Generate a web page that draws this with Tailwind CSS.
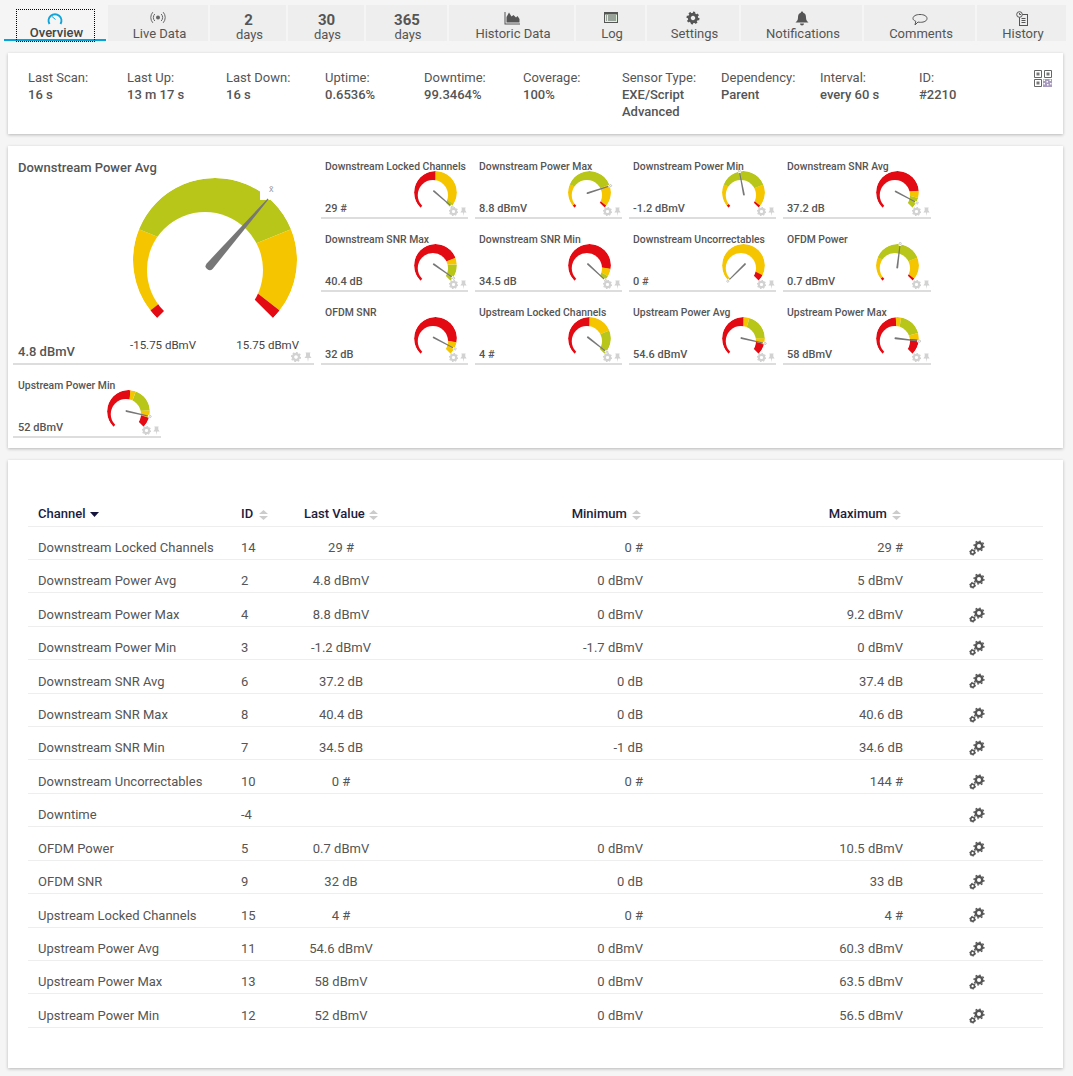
<!DOCTYPE html>
<html>
<head>
<meta charset="utf-8">
<script src="https://cdn.jsdelivr.net/npm/@tailwindcss/browser@4"></script>
</head>
<body class="bg-[#f5f5f5] font-['Roboto',sans-serif] text-[13px] text-[#555] w-[1073px] h-[1076px] overflow-hidden">
<svg class="absolute w-0 h-0">
  <defs>
    <mask id="band" maskUnits="userSpaceOnUse" x="-100" y="-100" width="200" height="200">
      <circle r="82" fill="#fff"/>
      <circle cx="-10" cy="10" r="58" fill="#000"/>
    </mask>
    <g id="needle">
      <path d="M-4,8 A4,4 0 0 0 4,8 L0.6,-81 L-0.6,-81 Z" fill="#777"/>
    </g>
    <g id="needles">
      <path d="M-3.5,8 A3.5,3.5 0 0 0 3.5,8 L1.8,-81 L-1.8,-81 Z" fill="#777"/>
      <path d="M-5,-90 L5,-90 L5,-76 L-5,-76 Z" fill="#fff"/>
      <circle cy="-85" r="4" fill="none" stroke="#bbb" stroke-width="3"/>
    </g>
    <g id="gear">
      <circle r="3" fill="none" stroke="currentColor" stroke-width="2.4"/>
      <circle r="4.4" fill="none" stroke="currentColor" stroke-width="1.6" pathLength="16" stroke-dasharray="1 1"/>
    </g>
    <g id="pin">
      <path d="M-2.5,-4.5 L2.5,-4.5 L2,-3.6 L2,-1 L3.5,1 L0.6,1 L0,5 L-0.6,1 L-3.5,1 L-2,-1 L-2,-3.6 Z" fill="currentColor"/>
    </g>
    <g id="cogs">
      <circle cx="10" cy="6" r="3.2" fill="none" stroke="currentColor" stroke-width="2.4"/>
      <circle cx="10" cy="6" r="4.9" fill="none" stroke="currentColor" stroke-width="1.4" pathLength="16" stroke-dasharray="1 1"/>
      <circle cx="3.6" cy="12.2" r="1.9" fill="none" stroke="currentColor" stroke-width="1.6"/>
      <circle cx="3.6" cy="12.2" r="2.9" fill="none" stroke="currentColor" stroke-width="1" pathLength="12" stroke-dasharray="1 1"/>
    </g>
    <g id="sort">
      <path d="M4.5,0 L9,4 L0,4 Z M0,6 L9,6 L4.5,10 Z" fill="currentColor"/>
    </g>
  </defs>
</svg>

<nav class="flex gap-[2px] pl-[4px] pt-[5px] h-[41px] text-center leading-[15px]">
  <div class="relative w-[102px] h-[36px] pt-[6px] border-b-2 border-[#00a5dc] font-medium text-[#444]">
    <svg class="block mx-auto h-[15px] w-[16px]" viewBox="0 0 16 15"><path d="M2.5,13 A6.4,6.4 0 1 1 13.5,13" fill="none" stroke="#10a4d8" stroke-width="2"/><path d="M5,5.5 L8.5,8.5" stroke="#10a4d8" stroke-width="1"/></svg>
    <div class="pl-[3px] leading-[14px]">Overview</div>
    <div class="absolute left-[12px] top-[4px] w-[79px] h-[33px] border border-dotted border-black"></div>
  </div>
  <div class="w-[100px] h-[36px] pt-[6px] bg-[#eee]">
    <svg class="block mx-auto h-[15px] w-[16px] mb-[1px]" viewBox="0 0 16 15" fill="none" stroke="#666" stroke-width="1"><circle cx="8" cy="6.5" r="2" fill="#666" stroke="none"/><path d="M4.8,3 A5,5 0 0 0 4.8,10 M11.2,3 A5,5 0 0 1 11.2,10 M2.8,1.2 A8,8 0 0 0 2.8,11.8 M13.2,1.2 A8,8 0 0 1 13.2,11.8"/></svg>
    <div class="pl-[3px] leading-[14px]">Live Data</div>
  </div>
  <div class="w-[76px] h-[36px] pt-[7px] bg-[#eee]"><div class="pl-[1px] text-[15px] leading-[16px] font-bold">2</div><div class="pl-[3px] leading-[13px]">days</div></div>
  <div class="w-[76px] h-[36px] pt-[7px] bg-[#eee]"><div class="pl-[1px] text-[15px] leading-[16px] font-bold">30</div><div class="pl-[3px] leading-[13px]">days</div></div>
  <div class="w-[81px] h-[36px] pt-[7px] bg-[#eee]"><div class="pl-[1px] text-[15px] leading-[16px] font-bold">365</div><div class="pl-[3px] leading-[13px]">days</div></div>
  <div class="w-[125px] h-[36px] pt-[6px] bg-[#eee]">
    <svg class="block mx-auto h-[15px] w-[16px] mb-[1px]" viewBox="0 0 16 15"><path d="M0.5,1 L0.5,13.5 L16,13.5 L16,12.5 L1.5,12.5 L1.5,1 Z M2.5,11.5 L2.5,6 L5,1.5 L7.5,5.5 L9.5,4 L12,6.5 L13.5,5 L15.5,8 L15.5,11.5 Z" fill="#555"/></svg>
    <div class="pl-[3px] leading-[14px]">Historic Data</div>
  </div>
  <div class="w-[69px] h-[36px] pt-[6px] bg-[#eee]">
    <svg class="block mx-auto h-[15px] w-[16px] mb-[1px]" viewBox="0 0 16 15"><rect x="1" y="1" width="14" height="11" fill="#555"/><rect x="2" y="3.5" width="12" height="7.5" fill="#dff0dc"/><path d="M3,5 H4 M3,7 H4 M3,9 H4 M5,5 H13 M5,7 H13 M5,9 H13" stroke="#555" stroke-width="1"/></svg>
    <div class="pl-[3px] leading-[14px]">Log</div>
  </div>
  <div class="w-[92px] h-[36px] pt-[6px] bg-[#eee]">
    <svg class="block mx-auto h-[15px] w-[16px] mb-[1px] text-[#555]" viewBox="-8 -7 16 15"><use href="#gear" transform="scale(1.25)"/></svg>
    <div class="pl-[3px] leading-[14px]">Settings</div>
  </div>
  <div class="w-[121px] h-[36px] pt-[6px] bg-[#eee]">
    <svg class="block mx-auto h-[15px] w-[16px] mb-[1px]" viewBox="0 0 16 15"><path d="M8,0.5 A1.2,1.2 0 0 1 9.2,1.8 C11.5,2.5 12,4.5 12,6.5 C12,9 13,10 14.5,11.5 L1.5,11.5 C3,10 4,9 4,6.5 C4,4.5 4.5,2.5 6.8,1.8 A1.2,1.2 0 0 1 8,0.5 Z M6,12.5 L10,12.5 A2,2 0 0 1 6,12.5 Z" fill="#555"/></svg>
    <div class="pl-[3px] leading-[14px]">Notifications</div>
  </div>
  <div class="w-[111px] h-[36px] pt-[6px] bg-[#eee]">
    <svg class="block mx-auto h-[15px] w-[16px] mb-[1px]" viewBox="0 0 16 15"><path d="M8,3.5 C12,3.5 15,5 15,7.5 C15,10 12,11.3 8.5,11.3 C7.5,11.3 6.5,11.2 6,11 L3,14 L3.8,10.3 C2,9.5 1,8.7 1,7.5 C1,5 4,3.5 8,3.5 Z" fill="none" stroke="#555" stroke-width="1"/></svg>
    <div class="pl-[3px] leading-[14px]">Comments</div>
  </div>
  <div class="w-[89px] h-[36px] pt-[6px] bg-[#eee]">
    <svg class="block mx-auto h-[15px] w-[16px] mb-[1px]" viewBox="0 0 16 15" fill="none" stroke="#555" stroke-width="1"><rect x="5.5" y="3.5" width="8" height="11"/><circle cx="5.5" cy="3.5" r="2.8" fill="#eee"/><path d="M5.5,2 V3.5 H7 M7.5,7.5 H11.5 M7.5,9.5 H11.5 M7.5,11.5 H11.5"/></svg>
    <div class="pl-[3px] leading-[14px]">History</div>
  </div>
</nav>

<section class="relative ml-[8px] mr-[10px] mt-[12px] h-[81px] bg-white shadow-[0_1px_3px_rgba(0,0,0,0.25)] pl-[20px] pt-[16px] leading-[17px]">
  <div class="grid grid-cols-[repeat(10,99px)]">
    <div><div>Last Scan:</div><div class="font-medium">16 s</div></div>
    <div><div>Last Up:</div><div class="font-medium">13 m 17 s</div></div>
    <div><div>Last Down:</div><div class="font-medium">16 s</div></div>
    <div><div>Uptime:</div><div class="font-medium">0.6536%</div></div>
    <div><div>Downtime:</div><div class="font-medium">99.3464%</div></div>
    <div><div>Coverage:</div><div class="font-medium">100%</div></div>
    <div><div>Sensor Type:</div><div class="font-medium">EXE/Script Advanced</div></div>
    <div><div>Dependency:</div><div class="font-medium">Parent</div></div>
    <div><div>Interval:</div><div class="font-medium">every 60 s</div></div>
    <div><div>ID:</div><div class="font-medium">#2210</div></div>
  </div>
  <svg class="absolute left-[1026px] top-[17px] w-[18px] h-[17px]" viewBox="0 0 18 17">
    <path d="M0.5,0.5 H7.5 V7.5 H0.5 Z M10.5,0.5 H17.5 V7.5 H10.5 Z M0.5,9.5 H7.5 V16.5 H0.5 Z" fill="none" stroke="#666"/>
    <path d="M2.5,2.5 H5.5 V5.5 H2.5 Z M12.5,2.5 H15.5 V5.5 H12.5 Z M2.5,11.5 H5.5 V14.5 H2.5 Z" fill="#777"/>
    <path d="M9,9 H18 V17 H9 Z" fill="#a99bc0"/>
    <path d="M9.5,9.5 H11 V11 H9.5 Z M12.5,11 H14 V12.5 H12.5 Z M15.5,9.5 H17 V11 H15.5 Z M9.5,13 H11 V14.5 H9.5 Z M13,14 H14.5 V15.5 H13 Z M16,13 H17.5 V14.5 H16 Z" fill="#fff"/>
  </svg>
</section>

<section class="ml-[8px] mr-[10px] mt-[12px] h-[302px] bg-white shadow-[0_1px_3px_rgba(0,0,0,0.25)] pl-[5px]">
  <div class="grid grid-cols-[301px_147px_147px_147px_148px] grid-rows-[repeat(4,73px)] gap-x-[7px] text-[10.4px] leading-[12px] font-medium">

    <div class="relative row-span-3 border-b-2 border-[#ddd] flex flex-col justify-between pl-[5px] pt-[14px] pb-[3px] text-[13px] leading-[16px]">
      <div>Downstream Power Avg</div>
      <div>4.8 dBmV</div>
      <svg class="absolute left-[112px] top-[24px] w-[180px] h-[180px]" viewBox="-90 -90 180 180">
        <g mask="url(#band)" fill="none" stroke-width="82">
          <circle r="41" pathLength="360" stroke="#e30a13" stroke-width="82" stroke-dasharray="8 360" transform="rotate(135)"/>
          <circle r="41" pathLength="360" stroke="#f5c600" stroke-width="82" stroke-dasharray="60 360" transform="rotate(142)"/>
          <circle r="41" pathLength="360" stroke="#b8c61a" stroke-width="82" stroke-dasharray="136 360" transform="rotate(202)"/>
          <circle r="41" pathLength="360" stroke="#f5c600" stroke-width="82" stroke-dasharray="60 360" transform="rotate(338)"/>
          <circle r="41" pathLength="360" stroke="#e30a13" stroke-width="82" stroke-dasharray="7 360" transform="rotate(38)"/>
        </g>
        <path d="M45,-70 L45,-60 L55,-60 L55,-70 Z" fill="#fff"/>
        <use href="#needle" transform="rotate(41)"/>
        <text x="54" y="-68" font-size="9" fill="#999" font-weight="400">x̄</text>
      </svg>
      <span class="absolute left-[117px] top-[192px] text-[11.5px] leading-[14px] font-normal text-[#444]">-15.75 dBmV</span>
      <span class="absolute right-[15px] top-[192px] text-[11.5px] leading-[14px] font-normal text-[#444]">15.75 dBmV</span>
      <svg class="absolute right-[13px] top-[206px] w-[10px] h-[10px] text-[#d2d2d2]" viewBox="-5 -5 10 10"><use href="#gear"/></svg>
      <svg class="absolute right-[1px] top-[206px] w-[10px] h-[10px] text-[#d2d2d2]" viewBox="-5 -5 10 10"><use href="#pin"/></svg>
    </div>

    <!-- Downstream Locked Channels -->
    <div class="relative border-b-2 border-[#ddd] flex flex-col justify-between pl-[4px] pt-[15px] pb-[2px]">
      <div class="relative z-10 whitespace-nowrap">Downstream Locked Channels</div><div class="text-[11px]">29 #</div>
      <svg class="absolute left-[91px] top-[23px] w-[47px] h-[47px]" viewBox="-90 -90 180 180">
        <g mask="url(#band)" fill="none">
          <circle r="41" pathLength="360" stroke="#e30a13" stroke-width="82" stroke-dasharray="135 360" transform="rotate(135)"/>
          <circle r="41" pathLength="360" stroke="#f5c600" stroke-width="82" stroke-dasharray="122 360" transform="rotate(270)"/>
          <circle r="41" pathLength="360" stroke="#b8c61a" stroke-width="82" stroke-dasharray="13 360" transform="rotate(32)"/>
        </g>
        <use href="#needles" transform="rotate(131)"/>
      </svg>
      <svg class="absolute right-[10px] top-[61px] w-[9px] h-[9px] text-[#d2d2d2]" viewBox="-5 -5 10 10"><use href="#gear"/></svg>
      <svg class="absolute right-[0px] top-[61px] w-[9px] h-[9px] text-[#d2d2d2]" viewBox="-5 -5 10 10"><use href="#pin"/></svg>
    </div>

    <!-- Downstream Power Max -->
    <div class="relative border-b-2 border-[#ddd] flex flex-col justify-between pl-[4px] pt-[15px] pb-[2px]">
      <div class="relative z-10 whitespace-nowrap">Downstream Power Max</div><div class="text-[11px]">8.8 dBmV</div>
      <svg class="absolute left-[91px] top-[23px] w-[47px] h-[47px]" viewBox="-90 -90 180 180">
        <g mask="url(#band)" fill="none">
          <circle r="41" pathLength="360" stroke="#e30a13" stroke-width="82" stroke-dasharray="8 360" transform="rotate(135)"/>
          <circle r="41" pathLength="360" stroke="#f5c600" stroke-width="82" stroke-dasharray="60 360" transform="rotate(142)"/>
          <circle r="41" pathLength="360" stroke="#b8c61a" stroke-width="82" stroke-dasharray="136 360" transform="rotate(202)"/>
          <circle r="41" pathLength="360" stroke="#f5c600" stroke-width="82" stroke-dasharray="60 360" transform="rotate(338)"/>
          <circle r="41" pathLength="360" stroke="#e30a13" stroke-width="82" stroke-dasharray="7 360" transform="rotate(38)"/>
        </g>
        <use href="#needles" transform="rotate(72)"/>
      </svg>
      <svg class="absolute right-[10px] top-[61px] w-[9px] h-[9px] text-[#d2d2d2]" viewBox="-5 -5 10 10"><use href="#gear"/></svg>
      <svg class="absolute right-[0px] top-[61px] w-[9px] h-[9px] text-[#d2d2d2]" viewBox="-5 -5 10 10"><use href="#pin"/></svg>
    </div>

    <!-- Downstream Power Min -->
    <div class="relative border-b-2 border-[#ddd] flex flex-col justify-between pl-[4px] pt-[15px] pb-[2px]">
      <div class="relative z-10 whitespace-nowrap">Downstream Power Min</div><div class="text-[11px]">-1.2 dBmV</div>
      <svg class="absolute left-[91px] top-[23px] w-[47px] h-[47px]" viewBox="-90 -90 180 180">
        <g mask="url(#band)" fill="none">
          <circle r="41" pathLength="360" stroke="#e30a13" stroke-width="82" stroke-dasharray="8 360" transform="rotate(135)"/>
          <circle r="41" pathLength="360" stroke="#f5c600" stroke-width="82" stroke-dasharray="60 360" transform="rotate(142)"/>
          <circle r="41" pathLength="360" stroke="#b8c61a" stroke-width="82" stroke-dasharray="136 360" transform="rotate(202)"/>
          <circle r="41" pathLength="360" stroke="#f5c600" stroke-width="82" stroke-dasharray="60 360" transform="rotate(338)"/>
          <circle r="41" pathLength="360" stroke="#e30a13" stroke-width="82" stroke-dasharray="7 360" transform="rotate(38)"/>
        </g>
        <use href="#needles" transform="rotate(349)"/>
      </svg>
      <svg class="absolute right-[10px] top-[61px] w-[9px] h-[9px] text-[#d2d2d2]" viewBox="-5 -5 10 10"><use href="#gear"/></svg>
      <svg class="absolute right-[0px] top-[61px] w-[9px] h-[9px] text-[#d2d2d2]" viewBox="-5 -5 10 10"><use href="#pin"/></svg>
    </div>

    <!-- Downstream SNR Avg -->
    <div class="relative border-b-2 border-[#ddd] flex flex-col justify-between pl-[4px] pt-[15px] pb-[2px]">
      <div class="relative z-10 whitespace-nowrap">Downstream SNR Avg</div><div class="text-[11px]">37.2 dB</div>
      <svg class="absolute left-[91px] top-[23px] w-[47px] h-[47px]" viewBox="-90 -90 180 180">
        <g mask="url(#band)" fill="none">
          <circle r="41" pathLength="360" stroke="#e30a13" stroke-width="82" stroke-dasharray="220 360" transform="rotate(135)"/>
          <circle r="41" pathLength="360" stroke="#f5c600" stroke-width="82" stroke-dasharray="20 360" transform="rotate(355)"/>
          <circle r="41" pathLength="360" stroke="#b8c61a" stroke-width="82" stroke-dasharray="30 360" transform="rotate(15)"/>
        </g>
        <use href="#needles" transform="rotate(118)"/>
      </svg>
      <svg class="absolute right-[10px] top-[61px] w-[9px] h-[9px] text-[#d2d2d2]" viewBox="-5 -5 10 10"><use href="#gear"/></svg>
      <svg class="absolute right-[0px] top-[61px] w-[9px] h-[9px] text-[#d2d2d2]" viewBox="-5 -5 10 10"><use href="#pin"/></svg>
    </div>

    <!-- Downstream SNR Max -->
    <div class="relative border-b-2 border-[#ddd] flex flex-col justify-between pl-[4px] pt-[15px] pb-[2px]">
      <div class="relative z-10 whitespace-nowrap">Downstream SNR Max</div><div class="text-[11px]">40.4 dB</div>
      <svg class="absolute left-[91px] top-[23px] w-[47px] h-[47px]" viewBox="-90 -90 180 180">
        <g mask="url(#band)" fill="none">
          <circle r="41" pathLength="360" stroke="#e30a13" stroke-width="82" stroke-dasharray="204 360" transform="rotate(135)"/>
          <circle r="41" pathLength="360" stroke="#f5c600" stroke-width="82" stroke-dasharray="18 360" transform="rotate(339)"/>
          <circle r="41" pathLength="360" stroke="#b8c61a" stroke-width="82" stroke-dasharray="48 360" transform="rotate(357)"/>
        </g>
        <use href="#needles" transform="rotate(125)"/>
      </svg>
      <svg class="absolute right-[10px] top-[61px] w-[9px] h-[9px] text-[#d2d2d2]" viewBox="-5 -5 10 10"><use href="#gear"/></svg>
      <svg class="absolute right-[0px] top-[61px] w-[9px] h-[9px] text-[#d2d2d2]" viewBox="-5 -5 10 10"><use href="#pin"/></svg>
    </div>

    <!-- Downstream SNR Min -->
    <div class="relative border-b-2 border-[#ddd] flex flex-col justify-between pl-[4px] pt-[15px] pb-[2px]">
      <div class="relative z-10 whitespace-nowrap">Downstream SNR Min</div><div class="text-[11px]">34.5 dB</div>
      <svg class="absolute left-[91px] top-[23px] w-[47px] h-[47px]" viewBox="-90 -90 180 180">
        <g mask="url(#band)" fill="none">
          <circle r="41" pathLength="360" stroke="#e30a13" stroke-width="82" stroke-dasharray="234 360" transform="rotate(135)"/>
          <circle r="41" pathLength="360" stroke="#f5c600" stroke-width="82" stroke-dasharray="21 360" transform="rotate(9)"/>
          <circle r="41" pathLength="360" stroke="#b8c61a" stroke-width="82" stroke-dasharray="15 360" transform="rotate(30)"/>
        </g>
        <use href="#needles" transform="rotate(133)"/>
      </svg>
      <svg class="absolute right-[10px] top-[61px] w-[9px] h-[9px] text-[#d2d2d2]" viewBox="-5 -5 10 10"><use href="#gear"/></svg>
      <svg class="absolute right-[0px] top-[61px] w-[9px] h-[9px] text-[#d2d2d2]" viewBox="-5 -5 10 10"><use href="#pin"/></svg>
    </div>

    <!-- Downstream Uncorrectables -->
    <div class="relative border-b-2 border-[#ddd] flex flex-col justify-between pl-[4px] pt-[15px] pb-[2px]">
      <div class="relative z-10 whitespace-nowrap">Downstream Uncorrectables</div><div class="text-[11px]">0 #</div>
      <svg class="absolute left-[91px] top-[23px] w-[47px] h-[47px]" viewBox="-90 -90 180 180">
        <g mask="url(#band)" fill="none">
          <circle r="41" pathLength="360" stroke="#f5c600" stroke-width="82" stroke-dasharray="252 360" transform="rotate(135)"/>
          <circle r="41" pathLength="360" stroke="#e30a13" stroke-width="82" stroke-dasharray="18 360" transform="rotate(27)"/>
        </g>
        <use href="#needles" transform="rotate(225)"/>
      </svg>
      <svg class="absolute right-[10px] top-[61px] w-[9px] h-[9px] text-[#d2d2d2]" viewBox="-5 -5 10 10"><use href="#gear"/></svg>
      <svg class="absolute right-[0px] top-[61px] w-[9px] h-[9px] text-[#d2d2d2]" viewBox="-5 -5 10 10"><use href="#pin"/></svg>
    </div>

    <!-- OFDM Power -->
    <div class="relative border-b-2 border-[#ddd] flex flex-col justify-between pl-[4px] pt-[15px] pb-[2px]">
      <div class="relative z-10 whitespace-nowrap">OFDM Power</div><div class="text-[11px]">0.7 dBmV</div>
      <svg class="absolute left-[91px] top-[23px] w-[47px] h-[47px]" viewBox="-90 -90 180 180">
        <g mask="url(#band)" fill="none">
          <circle r="41" pathLength="360" stroke="#e30a13" stroke-width="82" stroke-dasharray="8 360" transform="rotate(135)"/>
          <circle r="41" pathLength="360" stroke="#f5c600" stroke-width="82" stroke-dasharray="60 360" transform="rotate(142)"/>
          <circle r="41" pathLength="360" stroke="#b8c61a" stroke-width="82" stroke-dasharray="136 360" transform="rotate(202)"/>
          <circle r="41" pathLength="360" stroke="#f5c600" stroke-width="82" stroke-dasharray="60 360" transform="rotate(338)"/>
          <circle r="41" pathLength="360" stroke="#e30a13" stroke-width="82" stroke-dasharray="7 360" transform="rotate(38)"/>
        </g>
        <use href="#needles" transform="rotate(7)"/>
      </svg>
      <svg class="absolute right-[10px] top-[61px] w-[9px] h-[9px] text-[#d2d2d2]" viewBox="-5 -5 10 10"><use href="#gear"/></svg>
      <svg class="absolute right-[0px] top-[61px] w-[9px] h-[9px] text-[#d2d2d2]" viewBox="-5 -5 10 10"><use href="#pin"/></svg>
    </div>

    <!-- OFDM SNR -->
    <div class="relative border-b-2 border-[#ddd] flex flex-col justify-between pl-[4px] pt-[15px] pb-[2px]">
      <div class="relative z-10 whitespace-nowrap">OFDM SNR</div><div class="text-[11px]">32 dB</div>
      <svg class="absolute left-[91px] top-[23px] w-[47px] h-[47px]" viewBox="-90 -90 180 180">
        <g mask="url(#band)" fill="none">
          <circle r="41" pathLength="360" stroke="#e30a13" stroke-width="82" stroke-dasharray="235 360" transform="rotate(135)"/>
          <circle r="41" pathLength="360" stroke="#f5c600" stroke-width="82" stroke-dasharray="35 360" transform="rotate(10)"/>
        </g>
        <use href="#needles" transform="rotate(118)"/>
      </svg>
      <svg class="absolute right-[10px] top-[61px] w-[9px] h-[9px] text-[#d2d2d2]" viewBox="-5 -5 10 10"><use href="#gear"/></svg>
      <svg class="absolute right-[0px] top-[61px] w-[9px] h-[9px] text-[#d2d2d2]" viewBox="-5 -5 10 10"><use href="#pin"/></svg>
    </div>

    <!-- Upstream Locked Channels -->
    <div class="relative border-b-2 border-[#ddd] flex flex-col justify-between pl-[4px] pt-[15px] pb-[2px]">
      <div class="relative z-10 whitespace-nowrap">Upstream Locked Channels</div><div class="text-[11px]">4 #</div>
      <svg class="absolute left-[91px] top-[23px] w-[47px] h-[47px]" viewBox="-90 -90 180 180">
        <g mask="url(#band)" fill="none">
          <circle r="41" pathLength="360" stroke="#e30a13" stroke-width="82" stroke-dasharray="135 360" transform="rotate(135)"/>
          <circle r="41" pathLength="360" stroke="#f5c600" stroke-width="82" stroke-dasharray="68 360" transform="rotate(270)"/>
          <circle r="41" pathLength="360" stroke="#b8c61a" stroke-width="82" stroke-dasharray="67 360" transform="rotate(338)"/>
        </g>
        <use href="#needles" transform="rotate(128)"/>
      </svg>
      <svg class="absolute right-[10px] top-[61px] w-[9px] h-[9px] text-[#d2d2d2]" viewBox="-5 -5 10 10"><use href="#gear"/></svg>
      <svg class="absolute right-[0px] top-[61px] w-[9px] h-[9px] text-[#d2d2d2]" viewBox="-5 -5 10 10"><use href="#pin"/></svg>
    </div>

    <!-- Upstream Power Avg -->
    <div class="relative border-b-2 border-[#ddd] flex flex-col justify-between pl-[4px] pt-[15px] pb-[2px]">
      <div class="relative z-10 whitespace-nowrap">Upstream Power Avg</div><div class="text-[11px]">54.6 dBmV</div>
      <svg class="absolute left-[91px] top-[23px] w-[47px] h-[47px]" viewBox="-90 -90 180 180">
        <g mask="url(#band)" fill="none">
          <circle r="41" pathLength="360" stroke="#e30a13" stroke-width="82" stroke-dasharray="135 360" transform="rotate(135)"/>
          <circle r="41" pathLength="360" stroke="#f5c600" stroke-width="82" stroke-dasharray="16 360" transform="rotate(270)"/>
          <circle r="41" pathLength="360" stroke="#b8c61a" stroke-width="82" stroke-dasharray="74 360" transform="rotate(286)"/>
          <circle r="41" pathLength="360" stroke="#f5c600" stroke-width="82" stroke-dasharray="15 360" transform="rotate(0)"/>
          <circle r="41" pathLength="360" stroke="#e30a13" stroke-width="82" stroke-dasharray="30 360" transform="rotate(15)"/>
        </g>
        <use href="#needles" transform="rotate(103)"/>
      </svg>
      <svg class="absolute right-[10px] top-[61px] w-[9px] h-[9px] text-[#d2d2d2]" viewBox="-5 -5 10 10"><use href="#gear"/></svg>
      <svg class="absolute right-[0px] top-[61px] w-[9px] h-[9px] text-[#d2d2d2]" viewBox="-5 -5 10 10"><use href="#pin"/></svg>
    </div>

    <!-- Upstream Power Max -->
    <div class="relative border-b-2 border-[#ddd] flex flex-col justify-between pl-[4px] pt-[15px] pb-[2px]">
      <div class="relative z-10 whitespace-nowrap">Upstream Power Max</div><div class="text-[11px]">58 dBmV</div>
      <svg class="absolute left-[91px] top-[23px] w-[47px] h-[47px]" viewBox="-90 -90 180 180">
        <g mask="url(#band)" fill="none">
          <circle r="41" pathLength="360" stroke="#e30a13" stroke-width="82" stroke-dasharray="130 360" transform="rotate(135)"/>
          <circle r="41" pathLength="360" stroke="#f5c600" stroke-width="82" stroke-dasharray="15 360" transform="rotate(265)"/>
          <circle r="41" pathLength="360" stroke="#b8c61a" stroke-width="82" stroke-dasharray="65 360" transform="rotate(280)"/>
          <circle r="41" pathLength="360" stroke="#f5c600" stroke-width="82" stroke-dasharray="18 360" transform="rotate(345)"/>
          <circle r="41" pathLength="360" stroke="#e30a13" stroke-width="82" stroke-dasharray="42 360" transform="rotate(3)"/>
        </g>
        <use href="#needles" transform="rotate(97)"/>
      </svg>
      <svg class="absolute right-[10px] top-[61px] w-[9px] h-[9px] text-[#d2d2d2]" viewBox="-5 -5 10 10"><use href="#gear"/></svg>
      <svg class="absolute right-[0px] top-[61px] w-[9px] h-[9px] text-[#d2d2d2]" viewBox="-5 -5 10 10"><use href="#pin"/></svg>
    </div>

    <!-- Upstream Power Min -->
    <div class="relative w-[148px] border-b-2 border-[#ddd] flex flex-col justify-between pl-[5px] pt-[15px] pb-[2px]">
      <div class="relative z-10 whitespace-nowrap">Upstream Power Min</div><div class="text-[11px]">52 dBmV</div>
      <svg class="absolute left-[92px] top-[23px] w-[47px] h-[47px]" viewBox="-90 -90 180 180">
        <g mask="url(#band)" fill="none">
          <circle r="41" pathLength="360" stroke="#e30a13" stroke-width="82" stroke-dasharray="140 360" transform="rotate(135)"/>
          <circle r="41" pathLength="360" stroke="#f5c600" stroke-width="82" stroke-dasharray="15 360" transform="rotate(275)"/>
          <circle r="41" pathLength="360" stroke="#b8c61a" stroke-width="82" stroke-dasharray="67 360" transform="rotate(290)"/>
          <circle r="41" pathLength="360" stroke="#f5c600" stroke-width="82" stroke-dasharray="20 360" transform="rotate(357)"/>
          <circle r="41" pathLength="360" stroke="#e30a13" stroke-width="82" stroke-dasharray="28 360" transform="rotate(17)"/>
        </g>
        <use href="#needles" transform="rotate(103)"/>
      </svg>
      <svg class="absolute right-[10px] top-[61px] w-[9px] h-[9px] text-[#d2d2d2]" viewBox="-5 -5 10 10"><use href="#gear"/></svg>
      <svg class="absolute right-[0px] top-[61px] w-[9px] h-[9px] text-[#d2d2d2]" viewBox="-5 -5 10 10"><use href="#pin"/></svg>
    </div>
  </div>
</section>

<section class="ml-[8px] mr-[10px] mt-[12px] h-[608px] bg-white shadow-[0_1px_3px_rgba(0,0,0,0.25)] px-[20px] pt-[40px]">
  <table class="w-[1015px] table-fixed border-collapse">
    <colgroup>
      <col class="w-[203px]"><col class="w-[57px]"><col class="w-[106px]"><col class="w-[259px]"><col class="w-[260px]"><col class="w-[130px]">
    </colgroup>
    <thead class="text-[#1c1c3c] font-medium">
      <tr class="h-[26px] border-b border-[#eee]">
        <th class="pl-[10px] pt-[2px] text-left font-medium">Channel <svg class="inline ml-[1px] w-[9px] h-[5px] text-[#14143c]" viewBox="0 0 9 5"><path d="M0,0 H9 L4.5,5 Z" fill="currentColor"/></svg></th>
        <th class="pl-[10px] pt-[2px] text-left font-medium">ID <svg class="inline ml-[3px] w-[9px] h-[10px] text-[#ccc]" viewBox="0 0 9 10"><use href="#sort"/></svg></th>
        <th class="pt-[2px] text-center font-medium">Last Value <svg class="inline ml-[1px] w-[9px] h-[10px] text-[#ccc]" viewBox="0 0 9 10"><use href="#sort"/></svg></th>
        <th class="pr-[12px] pt-[2px] text-right font-medium">Minimum <svg class="inline ml-[2px] w-[9px] h-[10px] text-[#ccc]" viewBox="0 0 9 10"><use href="#sort"/></svg></th>
        <th class="pr-[12px] pt-[2px] text-right font-medium">Maximum <svg class="inline ml-[2px] w-[9px] h-[10px] text-[#ccc]" viewBox="0 0 9 10"><use href="#sort"/></svg></th>
        <th></th>
      </tr>
    </thead>
    <tbody class="[&_td]:pt-[10px]">
      <tr class="h-[33.43px] border-b border-[#eee]"><td class="pl-[10px]">Downstream Locked Channels</td><td class="pl-[10px]">14</td><td class="text-center">29 #</td><td class="pr-[10px] text-right">0 #</td><td class="pr-[10px] text-right">29 #</td><td><svg class="block ml-[56px] w-[16px] h-[16px] text-[#555]" viewBox="0 0 16 16"><use href="#cogs"/></svg></td></tr>
      <tr class="h-[33.43px] border-b border-[#eee]"><td class="pl-[10px]">Downstream Power Avg</td><td class="pl-[10px]">2</td><td class="text-center">4.8 dBmV</td><td class="pr-[10px] text-right">0 dBmV</td><td class="pr-[10px] text-right">5 dBmV</td><td><svg class="block ml-[56px] w-[16px] h-[16px] text-[#555]" viewBox="0 0 16 16"><use href="#cogs"/></svg></td></tr>
      <tr class="h-[33.43px] border-b border-[#eee]"><td class="pl-[10px]">Downstream Power Max</td><td class="pl-[10px]">4</td><td class="text-center">8.8 dBmV</td><td class="pr-[10px] text-right">0 dBmV</td><td class="pr-[10px] text-right">9.2 dBmV</td><td><svg class="block ml-[56px] w-[16px] h-[16px] text-[#555]" viewBox="0 0 16 16"><use href="#cogs"/></svg></td></tr>
      <tr class="h-[33.43px] border-b border-[#eee]"><td class="pl-[10px]">Downstream Power Min</td><td class="pl-[10px]">3</td><td class="text-center">-1.2 dBmV</td><td class="pr-[10px] text-right">-1.7 dBmV</td><td class="pr-[10px] text-right">0 dBmV</td><td><svg class="block ml-[56px] w-[16px] h-[16px] text-[#555]" viewBox="0 0 16 16"><use href="#cogs"/></svg></td></tr>
      <tr class="h-[33.43px] border-b border-[#eee]"><td class="pl-[10px]">Downstream SNR Avg</td><td class="pl-[10px]">6</td><td class="text-center">37.2 dB</td><td class="pr-[10px] text-right">0 dB</td><td class="pr-[10px] text-right">37.4 dB</td><td><svg class="block ml-[56px] w-[16px] h-[16px] text-[#555]" viewBox="0 0 16 16"><use href="#cogs"/></svg></td></tr>
      <tr class="h-[33.43px] border-b border-[#eee]"><td class="pl-[10px]">Downstream SNR Max</td><td class="pl-[10px]">8</td><td class="text-center">40.4 dB</td><td class="pr-[10px] text-right">0 dB</td><td class="pr-[10px] text-right">40.6 dB</td><td><svg class="block ml-[56px] w-[16px] h-[16px] text-[#555]" viewBox="0 0 16 16"><use href="#cogs"/></svg></td></tr>
      <tr class="h-[33.43px] border-b border-[#eee]"><td class="pl-[10px]">Downstream SNR Min</td><td class="pl-[10px]">7</td><td class="text-center">34.5 dB</td><td class="pr-[10px] text-right">-1 dB</td><td class="pr-[10px] text-right">34.6 dB</td><td><svg class="block ml-[56px] w-[16px] h-[16px] text-[#555]" viewBox="0 0 16 16"><use href="#cogs"/></svg></td></tr>
      <tr class="h-[33.43px] border-b border-[#eee]"><td class="pl-[10px]">Downstream Uncorrectables</td><td class="pl-[10px]">10</td><td class="text-center">0 #</td><td class="pr-[10px] text-right">0 #</td><td class="pr-[10px] text-right">144 #</td><td><svg class="block ml-[56px] w-[16px] h-[16px] text-[#555]" viewBox="0 0 16 16"><use href="#cogs"/></svg></td></tr>
      <tr class="h-[33.43px] border-b border-[#eee]"><td class="pl-[10px]">Downtime</td><td class="pl-[10px]">-4</td><td></td><td></td><td></td><td><svg class="block ml-[56px] w-[16px] h-[16px] text-[#555]" viewBox="0 0 16 16"><use href="#cogs"/></svg></td></tr>
      <tr class="h-[33.43px] border-b border-[#eee]"><td class="pl-[10px]">OFDM Power</td><td class="pl-[10px]">5</td><td class="text-center">0.7 dBmV</td><td class="pr-[10px] text-right">0 dBmV</td><td class="pr-[10px] text-right">10.5 dBmV</td><td><svg class="block ml-[56px] w-[16px] h-[16px] text-[#555]" viewBox="0 0 16 16"><use href="#cogs"/></svg></td></tr>
      <tr class="h-[33.43px] border-b border-[#eee]"><td class="pl-[10px]">OFDM SNR</td><td class="pl-[10px]">9</td><td class="text-center">32 dB</td><td class="pr-[10px] text-right">0 dB</td><td class="pr-[10px] text-right">33 dB</td><td><svg class="block ml-[56px] w-[16px] h-[16px] text-[#555]" viewBox="0 0 16 16"><use href="#cogs"/></svg></td></tr>
      <tr class="h-[33.43px] border-b border-[#eee]"><td class="pl-[10px]">Upstream Locked Channels</td><td class="pl-[10px]">15</td><td class="text-center">4 #</td><td class="pr-[10px] text-right">0 #</td><td class="pr-[10px] text-right">4 #</td><td><svg class="block ml-[56px] w-[16px] h-[16px] text-[#555]" viewBox="0 0 16 16"><use href="#cogs"/></svg></td></tr>
      <tr class="h-[33.43px] border-b border-[#eee]"><td class="pl-[10px]">Upstream Power Avg</td><td class="pl-[10px]">11</td><td class="text-center">54.6 dBmV</td><td class="pr-[10px] text-right">0 dBmV</td><td class="pr-[10px] text-right">60.3 dBmV</td><td><svg class="block ml-[56px] w-[16px] h-[16px] text-[#555]" viewBox="0 0 16 16"><use href="#cogs"/></svg></td></tr>
      <tr class="h-[33.43px] border-b border-[#eee]"><td class="pl-[10px]">Upstream Power Max</td><td class="pl-[10px]">13</td><td class="text-center">58 dBmV</td><td class="pr-[10px] text-right">0 dBmV</td><td class="pr-[10px] text-right">63.5 dBmV</td><td><svg class="block ml-[56px] w-[16px] h-[16px] text-[#555]" viewBox="0 0 16 16"><use href="#cogs"/></svg></td></tr>
      <tr class="h-[33.43px] border-b border-[#eee]"><td class="pl-[10px]">Upstream Power Min</td><td class="pl-[10px]">12</td><td class="text-center">52 dBmV</td><td class="pr-[10px] text-right">0 dBmV</td><td class="pr-[10px] text-right">56.5 dBmV</td><td><svg class="block ml-[56px] w-[16px] h-[16px] text-[#555]" viewBox="0 0 16 16"><use href="#cogs"/></svg></td></tr>
    </tbody>
  </table>
</section>
</body>
</html>
